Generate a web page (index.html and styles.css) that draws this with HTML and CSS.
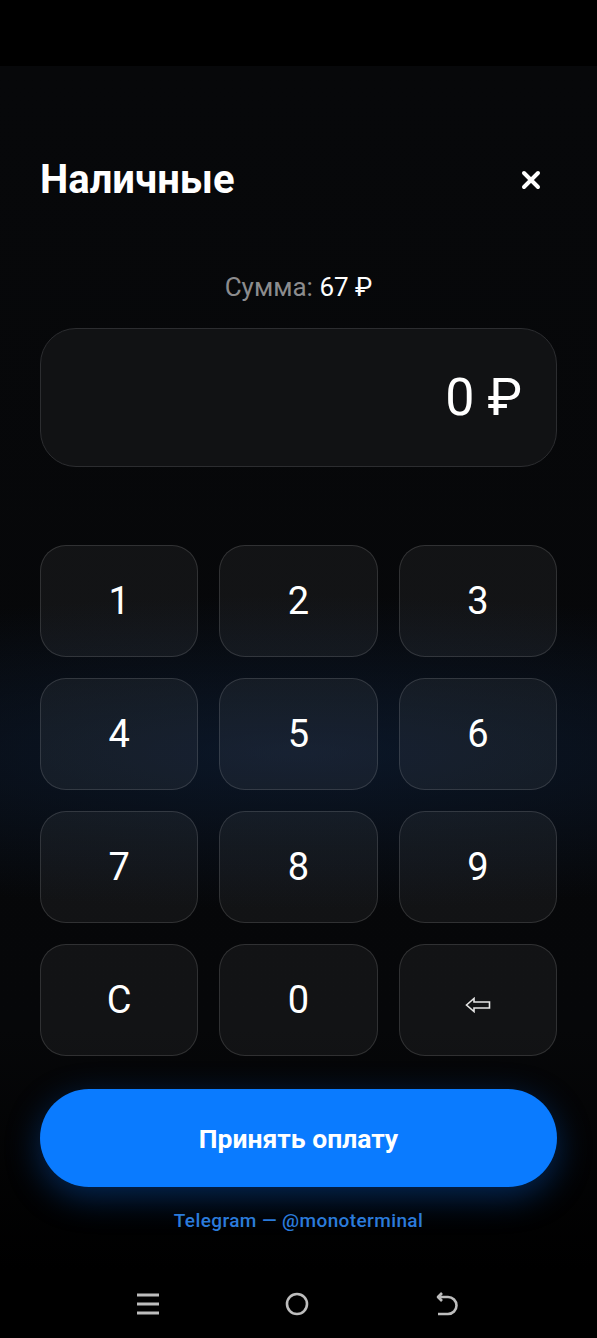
FILE: index.html
```html
<!DOCTYPE html>
<html lang="ru">
<head>
  <meta charset="UTF-8">
  <meta name="viewport" content="width=device-width, initial-scale=1.0">
  <title>Наличные</title>
  <link rel="stylesheet" href="styles.css">
</head>
<body>
  <div class="status"></div>

  <main class="screen">
    <header class="top">
      <h1 class="title">Наличные</h1>
      <button class="close" type="button" aria-label="Закрыть">
        <svg width="20" height="20" viewBox="0 0 20 20">
          <path d="M3 3 L17 17 M17 3 L3 17" stroke="#fff" stroke-width="4" stroke-linecap="round"/>
        </svg>
      </button>
    </header>

    <p class="sum">Сумма: <b>67 ₽</b></p>

    <div class="display">
      <span class="amount">0 ₽</span>
    </div>

    <div class="keypad">
      <button class="key" type="button">1</button>
      <button class="key" type="button">2</button>
      <button class="key" type="button">3</button>
      <button class="key" type="button">4</button>
      <button class="key" type="button">5</button>
      <button class="key" type="button">6</button>
      <button class="key" type="button">7</button>
      <button class="key" type="button">8</button>
      <button class="key" type="button">9</button>
      <button class="key" type="button">C</button>
      <button class="key" type="button">0</button>
      <button class="key key-back" type="button" aria-label="Стереть">
        <svg width="26" height="16" viewBox="0 0 26 16">
          <path d="M1.5 8 L9 1.5 V5 H24.5 V11 H9 V14.5 Z" fill="none" stroke="#e6e6e6" stroke-width="1.6" stroke-linejoin="miter"/>
        </svg>
      </button>
    </div>

    <button class="pay" type="button">Принять оплату</button>

    <p class="contact">Telegram — @monoterminal</p>
  </main>

  <nav class="navbar">
    <svg width="24" height="24" viewBox="0 0 24 24">
      <path d="M1 3 H23 M1 12 H23 M1 21 H23" stroke="#bdbdbd" stroke-width="3"/>
    </svg>
    <svg width="26" height="26" viewBox="0 0 26 26">
      <circle cx="13" cy="13" r="10" fill="none" stroke="#bdbdbd" stroke-width="2.6"/>
    </svg>
    <svg width="26" height="26" viewBox="0 0 26 26">
      <path d="M4 6 H14 A8.5 8.5 0 0 1 14 23 H4 M8 2 L4 6 L8 10" fill="none" stroke="#bdbdbd" stroke-width="2.6" stroke-linejoin="round"/>
    </svg>
  </nav>
</body>
</html>
```

FILE: styles.css
```css
* {margin: 0; padding: 0; box-sizing: border-box;}

body {
  background-color: #000;
  font-family: Roboto, "Noto Sans", sans-serif;
  color: #fff;
}

.status {
  height: 66px;
  background-color: #000;
}

.screen {
  height: 1204px;
  padding: 92px 40px 0;
  display: flex;
  flex-direction: column;
  /* синее свечение за средним рядом клавиш */
  background:
    radial-gradient(ellipse 130% 13% at 50% 57%, rgba(16, 38, 70, 0.5), rgba(16, 38, 70, 0) 100%),
    linear-gradient(#07080a, #060709 80%, #000);
}

.top {
  display: flex;
  justify-content: space-between;
  align-items: center;
  height: 44px;
}
.title {
  font-size: 40px;
  font-weight: 700;
  line-height: 44px;
}
.close {
  display: flex;
  background: none;
  border: none;
  margin-right: 16px;
}

.sum {
  margin-top: 70px;
  text-align: center;
  font-size: 26px;
  line-height: 30px;
  color: #8c8c8e;
}
.sum b {
  font-weight: 400;
  color: #fff;
}

.display {
  margin-top: 26px;
  height: 139px;
  border-radius: 36px;
  border: 1px solid #2c2d30;
  background-color: #111214;
  display: flex;
  align-items: center;
  justify-content: flex-end;
  padding-right: 34px;
}
.amount {
  font-size: 52px;
  line-height: 60px;
}

.keypad {
  margin-top: 78px;
  display: grid;
  grid-template-columns: repeat(3, 1fr);
  grid-auto-rows: 112px;
  gap: 21px;
}
.key {
  border-radius: 26px;
  border: 1px solid rgba(255, 255, 255, 0.13);
  background-color: rgba(255, 255, 255, 0.05);
  color: #fff;
  font-family: Roboto, sans-serif;
  font-size: 38px;
  font-weight: 400;
}
.key-back svg {
  margin-top: 14px;
}

.pay {
  margin-top: 33px;
  height: 98px;
  border: none;
  border-radius: 49px;
  background-color: #0a7bff;
  color: #fff;
  font-family: Roboto, sans-serif;
  font-size: 26.5px;
  font-weight: 700;
  box-shadow: 0 10px 34px rgba(10, 110, 240, 0.35);
}

.contact {
  margin-top: 23px;
  text-align: center;
  font-size: 19px;
  line-height: 22px;
  font-weight: 500;
  letter-spacing: 0.4px;
  color: #2b7bdb;
}

.navbar {
  height: 68px;
  background-color: #000;
  display: flex;
  justify-content: space-between;
  align-items: center;
  padding: 0 137px 0 136px;
}
```
